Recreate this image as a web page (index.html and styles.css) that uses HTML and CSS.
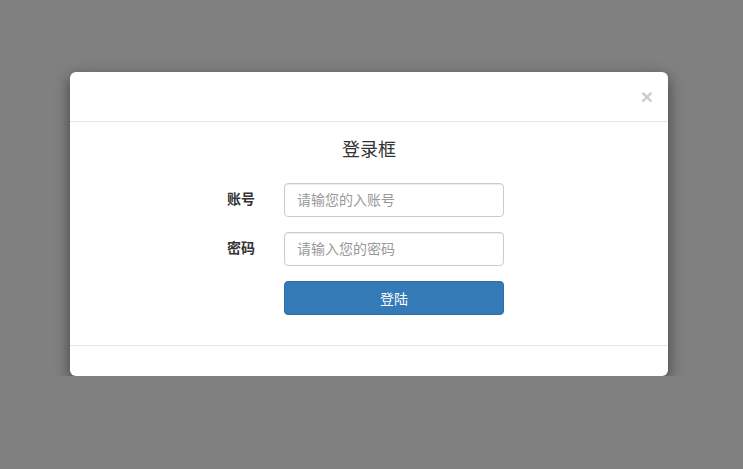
FILE: index.html
```html
<!DOCTYPE html>
<html lang="zh-CN">
<head>
  <meta charset="UTF-8">
  <meta name="viewport" content="width=device-width, initial-scale=1.0">
  <title>登录框</title>
  <link rel="stylesheet" href="styles.css">
</head>
<body>
  <div class="modal-dialog">
    <div class="modal-content">
      <div class="modal-header">
        <button class="close" type="button">&times;</button>
      </div>
      <div class="modal-body">
        <h4 class="modal-title">登录框</h4>
        <form class="form-horizontal">
          <div class="form-group">
            <label class="control-label" for="account">账号</label>
            <input class="form-control" type="text" id="account" placeholder="请输您的入账号">
          </div>
          <div class="form-group">
            <label class="control-label" for="password">密码</label>
            <input class="form-control" type="password" id="password" placeholder="请输入您的密码">
          </div>
          <div class="form-group">
            <span class="control-label"></span>
            <button class="btn-primary" type="button">登陆</button>
          </div>
        </form>
      </div>
      <div class="modal-footer"></div>
    </div>
  </div>
</body>
</html>
```

FILE: styles.css
```css
* {
  margin: 0;
  padding: 0;
  box-sizing: border-box;
}
body {
  font-family: "Helvetica Neue", "Liberation Sans", "Noto Sans CJK SC", sans-serif;
  font-size: 14px;
  line-height: 1.42857;
  color: #333;
  background: #808080;
}
.modal-dialog {
  width: 598px;
  margin: 72px 0 0 70px;
}
.modal-content {
  background: #fff;
  border-radius: 6px;
  box-shadow: 0 5px 15px rgba(0, 0, 0, 0.5);
}
.modal-header {
  height: 50px;
  padding: 12px 15px;
  border-bottom: 1px solid #e5e5e5;
  display: flex;
  justify-content: flex-end;
}
.close {
  background: none;
  border: none;
  font-size: 21px;
  font-weight: bold;
  line-height: 1;
  color: #000;
  opacity: 0.2;
  font-family: "Liberation Sans", sans-serif;
  cursor: pointer;
}
.modal-body {
  padding: 15px;
}
.modal-title {
  font-size: 18px;
  font-weight: normal;
  line-height: 26px;
  text-align: center;
  margin-bottom: 20px;
}
.form-group {
  display: flex;
  align-items: center;
  margin-bottom: 15px;
}
.control-label {
  width: 199px;
  text-align: right;
  font-weight: bold;
  padding-right: 29px;
}
.form-control {
  width: 220px;
  height: 34px;
  padding: 6px 12px;
  font-size: 14px;
  font-family: inherit;
  color: #555;
  border: 1px solid #ccc;
  border-radius: 4px;
  box-shadow: inset 0 1px 1px rgba(0, 0, 0, 0.075);
}
.form-control::placeholder {
  color: #999;
}
.btn-primary {
  width: 220px;
  height: 34px;
  font-size: 14px;
  font-family: inherit;
  color: #fff;
  background: #337ab7;
  border: 1px solid #2e6da4;
  border-radius: 4px;
  cursor: pointer;
}
.modal-footer {
  height: 31px;
  border-top: 1px solid #e5e5e5;
}
```
